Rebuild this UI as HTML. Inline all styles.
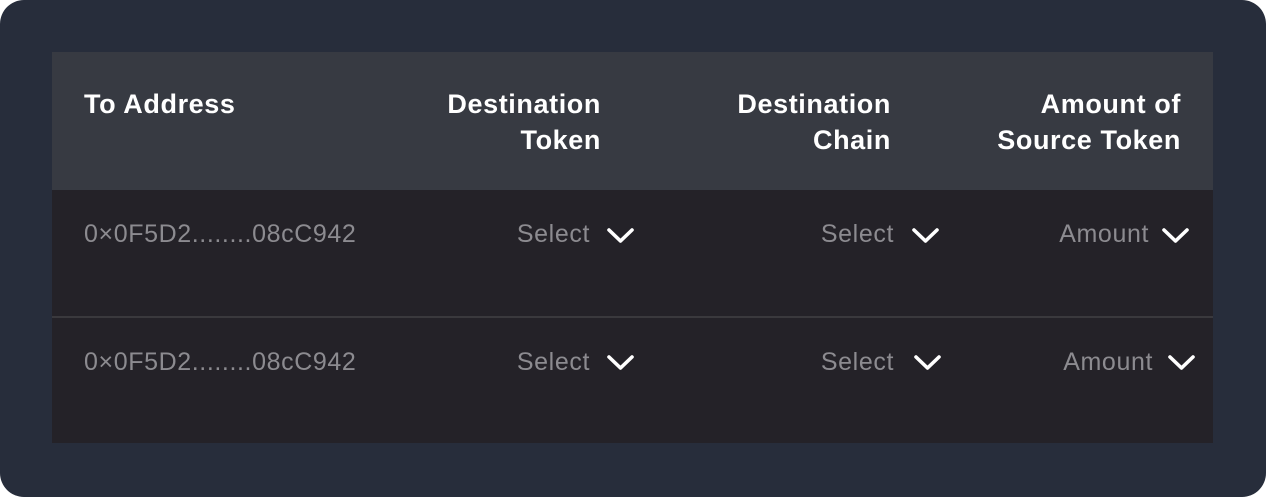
<!DOCTYPE html>
<html><head><style>
html,body{margin:0;padding:0;background:#fff;}
.outer{position:absolute;left:0;top:0;width:1266px;height:497px;background:#272d3b;border-radius:24px;overflow:hidden;font-family:"Liberation Sans",sans-serif;}
.hdr{position:absolute;left:52px;top:52px;width:1161px;height:138px;background:#373a42;}
.body{position:absolute;left:52px;top:190px;width:1161px;height:253px;background:#242228;}
.div{position:absolute;left:52px;top:316px;width:1161px;height:2px;background:#3a393d;}
.h{position:absolute;color:#fff;font-size:27px;font-weight:bold;line-height:36px;letter-spacing:0.6px;white-space:nowrap;}
.t{position:absolute;color:#8c8b90;font-size:25px;line-height:30px;white-space:nowrap;letter-spacing:0.6px;}
svg{position:absolute;}
</style></head><body>
<div class="outer">
<div class="hdr"></div><div class="body"></div><div class="div"></div>
<div class="h" style="left:84px;top:86px;">To Address</div>
<div class="h" style="right:665px;top:86px;text-align:right;">Destination<br>Token</div>
<div class="h" style="right:375px;top:86px;text-align:right;">Destination<br>Chain</div>
<div class="h" style="right:85px;top:86px;text-align:right;">Amount of<br>Source Token</div>

<div class="t" style="left:84px;top:219px;">0×0F5D2........08cC942</div>
<div class="t" style="right:676px;top:219px;">Select</div>
<div class="t" style="right:372px;top:219px;">Select</div>
<div class="t" style="right:117px;top:219px;">Amount</div>

<div class="t" style="left:84px;top:347px;">0×0F5D2........08cC942</div>
<div class="t" style="right:676px;top:347px;">Select</div>
<div class="t" style="right:372px;top:347px;">Select</div>
<div class="t" style="right:113px;top:347px;">Amount</div>

<svg style="left:606px;top:226px" width="30" height="20"><path d="M3 4 L14.5 15 L26 4" stroke="#fff" stroke-width="3.6" fill="none" stroke-linecap="round" stroke-linejoin="round"/></svg>
<svg style="left:911px;top:226px" width="30" height="20"><path d="M3 4 L14.5 15 L26 4" stroke="#fff" stroke-width="3.6" fill="none" stroke-linecap="round" stroke-linejoin="round"/></svg>
<svg style="left:1161px;top:226px" width="30" height="20"><path d="M3 4 L14.5 15 L26 4" stroke="#fff" stroke-width="3.6" fill="none" stroke-linecap="round" stroke-linejoin="round"/></svg>
<svg style="left:606px;top:353px" width="30" height="20"><path d="M3 4 L14.5 15 L26 4" stroke="#fff" stroke-width="3.6" fill="none" stroke-linecap="round" stroke-linejoin="round"/></svg>
<svg style="left:913px;top:353px" width="30" height="20"><path d="M3 4 L14.5 15 L26 4" stroke="#fff" stroke-width="3.6" fill="none" stroke-linecap="round" stroke-linejoin="round"/></svg>
<svg style="left:1167px;top:353px" width="30" height="20"><path d="M3 4 L14.5 15 L26 4" stroke="#fff" stroke-width="3.6" fill="none" stroke-linecap="round" stroke-linejoin="round"/></svg>
</div>
</body></html>
